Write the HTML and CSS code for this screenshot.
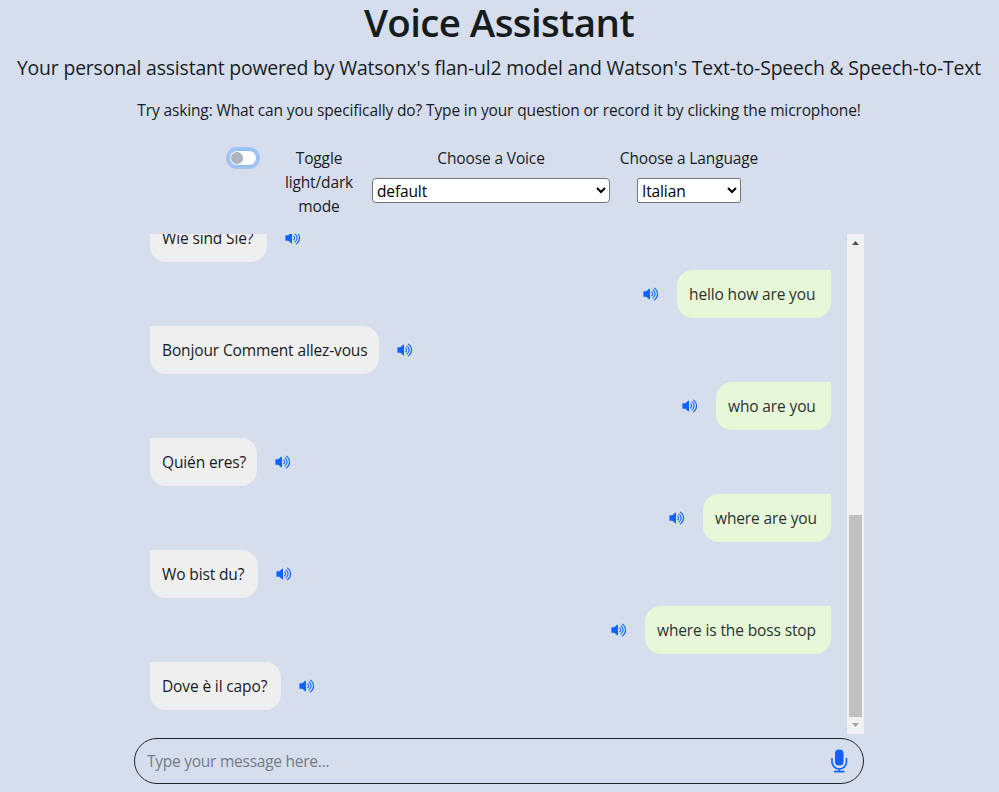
FILE: index.html
```html
<!DOCTYPE html>
<html lang="en">
<head>
<meta charset="utf-8">
<title>Voice Assistant</title>
<link rel="stylesheet" href="styles.css">
</head>
<body>
<svg class="sprite" aria-hidden="true">
  <symbol id="volume" viewBox="0 0 16 16"><path d="M.9 5.3h2.4L6.2 2.7Q7 2.1 7 3v10q0 .9-.8.3L3.300 10.700H.9Q.4 10.700 .4 10.200V5.800Q.4 5.300 .9 5.300z"/><path class="wave" d="M8.600 6.100a2.300 2.300 0 0 1 0 3.800M10 4.100a4.700 4.700 0 0 1 0 7.800M11.400 2.100a7.100 7.100 0 0 1 0 11.800"/></symbol>
</svg>
<main class="page">
  <h1 class="title">Voice Assistant</h1>
  <p class="lead">Your personal assistant powered by Watsonx's flan-ul2 model and Watson's Text-to-Speech &amp; Speech-to-Text</p>
  <p class="hint">Try asking: What can you specifically do? Type in your question or record it by clicking the microphone!</p>
  <div class="controls">
    <span class="switch"></span>
    <label class="mode">Toggle light/dark mode</label>
    <div class="field voice"><label>Choose a Voice</label><select><option>default</option></select></div>
    <div class="field language"><label>Choose a Language</label><select><option>Italian</option></select></div>
  </div>
  <section class="chat">
    <div class="messages">
      <div class="row"><p class="bubble w1">Wie sind Sie?</p><svg class="speaker"><use href="#volume"/></svg></div>
      <div class="row mine"><p class="bubble w2">hello how are you</p><svg class="speaker"><use href="#volume"/></svg></div>
      <div class="row"><p class="bubble w3">Bonjour Comment allez-vous</p><svg class="speaker"><use href="#volume"/></svg></div>
      <div class="row mine"><p class="bubble w4">who are you</p><svg class="speaker"><use href="#volume"/></svg></div>
      <div class="row"><p class="bubble w5">Quién eres?</p><svg class="speaker"><use href="#volume"/></svg></div>
      <div class="row mine"><p class="bubble w6">where are you</p><svg class="speaker"><use href="#volume"/></svg></div>
      <div class="row"><p class="bubble w7">Wo bist du?</p><svg class="speaker"><use href="#volume"/></svg></div>
      <div class="row mine"><p class="bubble w8">where is the boss stop</p><svg class="speaker"><use href="#volume"/></svg></div>
      <div class="row"><p class="bubble w9">Dove è il capo?</p><svg class="speaker"><use href="#volume"/></svg></div>
    </div>
    <div class="scrollbar"><i class="arrow up"></i><i class="thumb"></i><i class="arrow down"></i></div>
  </section>
  <div class="composer">
    <span class="placeholder">Type your message here...</span>
    <svg class="mic" viewBox="0 0 24 24"><rect x="8" y="0.500" width="8.500" height="16" rx="4"/><path class="stand" d="M5 9.500v3.200a7.250 7.250 0 0 0 14.500 0V9.500M12.250 20v2.500M7.500 22.600h9.500"/></svg>
  </div>
</main>
</body>
</html>
```
FILE: styles.css
```css
* { box-sizing: border-box; }
body {
  margin: 0;
  height: 792px;
  overflow: hidden;
  background: #d6deed;
  color: #161c1e;
  font: 15.5px/24px "Open Sans", "Noto Sans", sans-serif;
  letter-spacing: -0.13px;
}
p, h1 { margin: 0; }
.sprite { display: none; }
.page { display: flex; flex-direction: column; align-items: center; width: 998px; }
.title { height: 46px; font-size: 38.5px; line-height: 44px; font-weight: 600; letter-spacing: -0.6px; white-space: nowrap; }
.lead { height: 30px; margin-top: 7px; font-size: 19.4px; line-height: 30px; letter-spacing: -0.17px; white-space: nowrap; }
.hint { margin-top: 15px; white-space: nowrap; }
.controls { display: flex; align-self: flex-start; height: 88px; margin: 24px 0 0 229px; text-align: center; white-space: nowrap; }
.switch {
  width: 28px; height: 16px; margin-top: 4px;
  border: 1px solid #86b7fe; border-radius: 8px;
  background: radial-gradient(circle at 7px 7px, #adb5bd 5.6px, #fff 6.3px);
  box-shadow: 0 0 0 3px #a1c3f2;
}
.mode { width: 72px; margin-left: 26px; white-space: normal; }
.field { display: flex; flex-direction: column; align-items: center; }
.voice { width: 238px; margin-left: 17px; }
.language { width: 140px; margin-left: 9px; }
select {
  height: 25px; margin-top: 8px; padding: 0;
  border: 1px solid #767676; border-radius: 4px;
  background-color: #fff; color: #000; font: inherit; letter-spacing: inherit;
}
.voice select { width: 238px; }
.language select { width: 104px; border-radius: 2px; }
.chat { display: flex; width: 730px; height: 500px; }
.messages {
  display: flex; flex: 1; flex-direction: column; justify-content: flex-end; gap: 8px;
  padding: 0 16px 24px; overflow: hidden;
}
.row { display: flex; flex: none; align-items: center; gap: 18px; height: 48px; }
.mine { flex-direction: row-reverse; }
.bubble {
  height: 48px; padding: 12px; border-radius: 0 16px 16px 16px;
  background: #efefef; white-space: nowrap;
}
.mine .bubble { border-radius: 16px 0 16px 16px; background: #e6f8d8; color: #2b3331; }
.w1 { width: 117px; }
.w2 { width: 154px; }
.w3 { width: 229px; }
.w4 { width: 115px; }
.w5 { width: 107px; }
.w6 { width: 128px; }
.w7 { width: 108px; }
.w8 { width: 186px; }
.w9 { width: 131px; }
.speaker { width: 16px; height: 16px; fill: #0f62fe; }
.wave { fill: none; stroke: #0f62fe; stroke-width: 1.1; stroke-linecap: round; }
.scrollbar { display: flex; flex-direction: column; align-items: center; width: 17px; background: #f1f1f1; }
.arrow { width: 7px; height: 4px; }
.up { margin-top: 7px; background: #505050; clip-path: polygon(50% 0, 100% 100%, 0 100%); }
.thumb { width: 13px; height: 202px; margin-top: 270px; background: #c1c1c1; }
.down { margin-top: 6px; background: #a3a3a3; clip-path: polygon(0 0, 100% 0, 50% 100%); }
.composer {
  display: flex; align-items: center; justify-content: space-between;
  width: 730px; height: 46px; margin-top: 4px; padding: 0 12px;
  border: 1px solid #212529; border-radius: 23px;
}
.placeholder { color: #737a84; letter-spacing: -0.25px; }
.mic { width: 24px; height: 24px; fill: #0f62fe; }
.stand { fill: none; stroke: #0f62fe; stroke-width: 1.6; stroke-linecap: round; }
```
